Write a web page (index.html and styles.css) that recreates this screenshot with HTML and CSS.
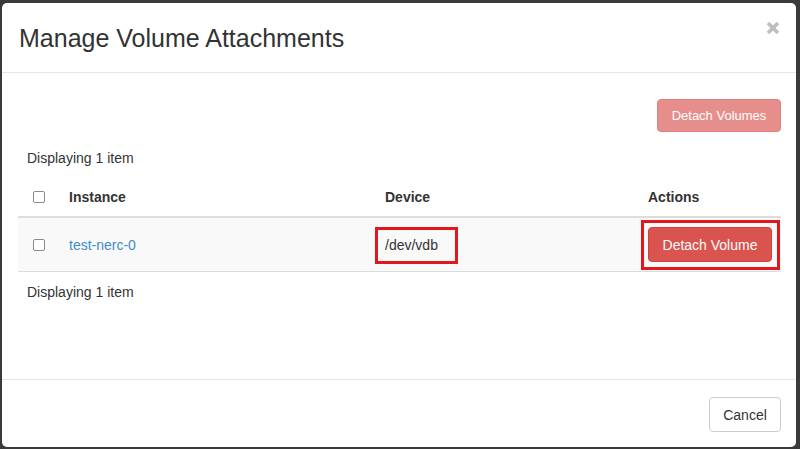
FILE: index.html
```html
<!DOCTYPE html>
<html lang="en">
<head>
<meta charset="utf-8">
<title>Manage Volume Attachments</title>
<link rel="stylesheet" href="styles.css">
</head>
<body>
<div class="modal">
  <div class="modal-header">
    <h3 class="modal-title">Manage Volume Attachments</h3>
    <button class="close" type="button" aria-label="Close">
      <svg width="14" height="14" viewBox="0 0 14 14"><path d="M2 2 L12 12 M12 2 L2 12" stroke="#bfbfbf" stroke-width="3.8" stroke-linecap="butt"/></svg>
    </button>
  </div>
  <div class="modal-body">
    <div class="table-actions">
      <button class="btn btn-danger btn-disabled" type="button">Detach Volumes</button>
    </div>
    <div class="count">Displaying 1 item</div>
    <table class="table">
      <colgroup>
        <col class="c-check">
        <col class="c-instance">
        <col class="c-device">
        <col class="c-actions">
      </colgroup>
      <thead>
        <tr>
          <th class="check"><input type="checkbox" class="cb"></th>
          <th>Instance</th>
          <th>Device</th>
          <th>Actions</th>
        </tr>
      </thead>
      <tbody>
        <tr>
          <td class="check"><input type="checkbox" class="cb"></td>
          <td><a href="#" class="link">test-nerc-0</a></td>
          <td><span class="hl hl-device">/dev/vdb</span></td>
          <td><span class="hl hl-action"><button class="btn btn-danger btn-row" type="button">Detach Volume</button></span></td>
        </tr>
      </tbody>
    </table>
    <div class="count count-bottom">Displaying 1 item</div>
  </div>
  <div class="modal-footer">
    <button class="btn btn-default" type="button">Cancel</button>
  </div>
</div>
</body>
</html>
```
FILE: styles.css
```css
html, body {
  margin: 0;
  padding: 0;
  width: 800px;
  height: 449px;
  overflow: hidden;
}
body {
  background: #3a3a3a;
  font-family: "Liberation Sans", Arial, Helvetica, sans-serif;
  font-size: 14px;
  line-height: 20px;
  color: #333;
}
.modal {
  margin: 3px 0 0 2px;
  width: 794px;
  height: 444px;
  background: #fff;
  border-radius: 5px;
  display: flex;
  flex-direction: column;
  box-sizing: border-box;
}
.modal-header {
  display: flex;
  justify-content: space-between;
  align-items: flex-start;
  padding: 18px 16px 17px 17px;
  border-bottom: 1px solid #e5e5e5;
}
.modal-title {
  margin: 0;
  font-size: 25px;
  font-weight: normal;
  line-height: 34px;
  color: #333;
}
.close {
  background: none;
  border: 0;
  padding: 0;
  margin-top: 0;
  width: 14px;
  height: 14px;
  display: block;
  cursor: pointer;
}
.close svg { display: block; }
.modal-body {
  flex: 1;
  padding: 26px 15px 0 16px;
}
.table-actions {
  display: flex;
  justify-content: flex-end;
}
.btn {
  font-family: "Liberation Sans", Arial, Helvetica, sans-serif;
  border-radius: 4px;
  box-sizing: border-box;
  cursor: pointer;
  display: inline-flex;
  align-items: center;
  justify-content: center;
}
.btn-danger {
  background: #d9534f;
  border: 1px solid #d43f3a;
  color: #fff;
}
.btn-disabled {
  opacity: 0.65;
  font-size: 13px;
  width: 124px;
  height: 33px;
  padding: 0;
}
.btn-row {
  font-size: 14px;
  width: 124px;
  height: 35px;
  padding: 0;
}
.btn-default {
  background: #fff;
  border: 1px solid #ccc;
  color: #333;
  font-size: 14px;
  width: 72px;
  height: 35px;
  padding: 0;
}
.count {
  margin-top: 16px;
  padding-left: 9px;
  line-height: 20px;
}
.count-bottom {
  margin-top: 10px;
}
.table {
  margin-top: 12px;
  width: 763px;
  border-collapse: collapse;
  table-layout: fixed;
}
.c-check { width: 43px; }
.c-instance { width: 316px; }
.c-device { width: 263px; }
.c-actions { width: 141px; }
.table th {
  text-align: left;
  font-weight: bold;
  padding: 7px 8px 9px;
  border-bottom: 2px solid #ddd;
  line-height: 20px;
}
.table td {
  padding: 9px 8px 9px;
  background: #f9f9f9;
  border-bottom: 1px solid #ddd;
  vertical-align: middle;
  line-height: 20px;
}
.table .check {
  padding-left: 15px;
  padding-right: 0;
}
.cb {
  -webkit-appearance: none;
  appearance: none;
  margin: 0;
  width: 12px;
  height: 12px;
  border: 1px solid #8a8a8a;
  border-radius: 2px;
  background: #fff;
  display: block;
  box-sizing: border-box;
}
.link {
  color: #428bca;
  text-decoration: none;
}
.hl {
  position: relative;
  display: inline-block;
  vertical-align: middle;
}
.hl::after {
  content: "";
  position: absolute;
  border: 3px solid #e3151d;
  pointer-events: none;
}
.hl-device::after {
  left: -10px;
  right: -20px;
  top: -8px;
  bottom: -9px;
}
.hl-action .btn { display: flex; }
.hl-action::after {
  left: -7px;
  right: -8px;
  top: -7px;
  bottom: -8px;
}
.modal-footer {
  display: flex;
  justify-content: flex-end;
  padding: 17px 15px 15px;
  border-top: 1px solid #e5e5e5;
}
```
